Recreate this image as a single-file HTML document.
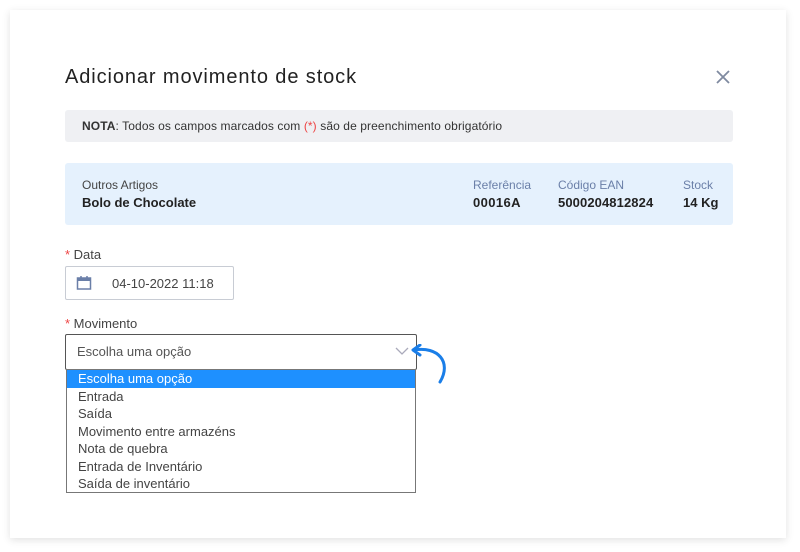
<!DOCTYPE html>
<html><head><style>
*{box-sizing:border-box;margin:0;padding:0}
body{width:800px;height:552px;background:#fff;font-family:"Liberation Sans",sans-serif;position:relative;overflow:hidden}
.card{position:absolute;left:10px;top:10px;width:776px;height:528px;background:#fff;box-shadow:0 2px 8px rgba(0,0,0,.12)}
.a{position:absolute;white-space:nowrap}
</style></head><body>
<div class="card"></div>
<div class="a" style="left:65px;top:66px;font-size:20px;color:#222;letter-spacing:0.9px">Adicionar movimento de stock</div>
<svg class="a" style="left:716px;top:70px" width="14" height="14"><path d="M1 1L13 13M13 1L1 13" stroke="#7f8aa0" stroke-width="1.8"/></svg>
<div class="a" style="left:65px;top:110px;width:668px;height:32px;background:#eff0f3;border-radius:3px"></div>
<div class="a" style="left:82px;top:119px;font-size:12px;color:#333;letter-spacing:0.1px"><b>NOTA</b>: Todos os campos marcados com <span style="color:#e44">(*)</span> são de preenchimento obrigatório</div>
<div class="a" style="left:65px;top:163px;width:668px;height:62px;background:#e5f1fd;border-radius:3px"></div>
<div class="a" style="left:82px;top:178px;font-size:12px;color:#444">Outros Artigos</div>
<div class="a" style="left:82px;top:195px;font-size:13px;font-weight:bold;color:#222">Bolo de Chocolate</div>
<div class="a" style="left:473px;top:178px;font-size:12px;color:#6a7fa8">Referência</div>
<div class="a" style="left:473px;top:195px;font-size:13px;font-weight:bold;color:#222;letter-spacing:0.4px">00016A</div>
<div class="a" style="left:558px;top:178px;font-size:12px;color:#6a7fa8">Código EAN</div>
<div class="a" style="left:558px;top:195px;font-size:13px;font-weight:bold;color:#222;letter-spacing:0.1px">5000204812824</div>
<div class="a" style="left:683px;top:178px;font-size:12px;color:#6a7fa8">Stock</div>
<div class="a" style="left:683px;top:195px;font-size:13px;font-weight:bold;color:#222">14 Kg</div>
<div class="a" style="left:65px;top:247px;font-size:13px;color:#444"><span style="color:#e44">* </span>Data</div>
<div class="a" style="left:65px;top:266px;width:169px;height:34px;border:1px solid #c8ccd4;border-radius:2px"></div>
<svg class="a" style="left:76px;top:275px" width="16" height="16"><rect x="1.5" y="3" width="13" height="11" fill="none" stroke="#6a7fa8" stroke-width="1.5"/><rect x="1.5" y="3" width="13" height="3" fill="#6a7fa8"/><path d="M5 1v3M11 1v3" stroke="#6a7fa8" stroke-width="1.5"/></svg>
<div class="a" style="left:112px;top:276px;font-size:13px;color:#444">04-10-2022 11:18</div>
<div class="a" style="left:65px;top:316px;font-size:13px;color:#444"><span style="color:#e44">* </span>Movimento</div>
<div class="a" style="left:65px;top:334px;width:352px;height:36px;border:1px solid #555;border-radius:2px;background:#fff"></div>
<div class="a" style="left:77px;top:344px;font-size:13px;color:#555">Escolha uma opção</div>
<svg class="a" style="left:395px;top:346px" width="14" height="10"><path d="M1 2L7 8L13 2" stroke="#aab" stroke-width="1.3" fill="none"/></svg>
<svg class="a" style="left:410px;top:344px" width="42" height="42"><path d="M4 6C28 2 42 18 30 38" stroke="#1a7ee8" stroke-width="3" fill="none" stroke-linecap="round"/><path d="M10 1L3 6L10 11" stroke="#1a7ee8" stroke-width="3" fill="none" stroke-linecap="round" stroke-linejoin="round"/></svg>
<div class="a" style="left:66px;top:369px;width:350px;height:124px;border:1px solid #777;background:#fff;font-size:13px;color:#444;line-height:17.5px">
<div style="background:#1e90ff;color:#fff;padding-left:11px">Escolha uma opção</div>
<div style="padding-left:11px">Entrada</div>
<div style="padding-left:11px">Saída</div>
<div style="padding-left:11px">Movimento entre armazéns</div>
<div style="padding-left:11px">Nota de quebra</div>
<div style="padding-left:11px">Entrada de Inventário</div>
<div style="padding-left:11px">Saída de inventário</div>
</div>
</body></html>
